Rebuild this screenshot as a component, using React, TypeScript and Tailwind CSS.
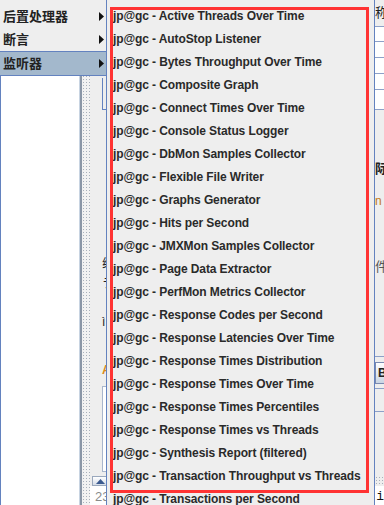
import React from 'react';

const items = [
  'Active Threads Over Time',
  'AutoStop Listener',
  'Bytes Throughput Over Time',
  'Composite Graph',
  'Connect Times Over Time',
  'Console Status Logger',
  'DbMon Samples Collector',
  'Flexible File Writer',
  'Graphs Generator',
  'Hits per Second',
  'JMXMon Samples Collector',
  'Page Data Extractor',
  'PerfMon Metrics Collector',
  'Response Codes per Second',
  'Response Latencies Over Time',
  'Response Times Distribution',
  'Response Times Over Time',
  'Response Times Percentiles',
  'Response Times vs Threads',
  'Synthesis Report (filtered)',
  'Transaction Throughput vs Threads',
  'Transactions per Second',
];

const Arrow = () => (
  <svg width="5" height="9" viewBox="0 0 5 9">
    <polygon points="0,0 5,4.5 0,9" fill="#111" />
  </svg>
);

const MenuItem = ({ label, selected }: { label: string; selected?: boolean }) => (
  <div
    className={`flex items-center justify-between pl-[3px] pr-[2px] ${
      selected ? 'h-[24px] bg-[#a3b8cc] border-t border-[#6382bf]' : 'h-[23px]'
    }`}
  >
    <span className="font-bold text-[13px] text-[#222]">{label}</span>
    <Arrow />
  </div>
);

const App = () => {
  return (
    <div
      className="relative w-[384px] h-[505px] overflow-hidden bg-[#eeeeee]"
      style={{ fontFamily: '"Liberation Sans", "Noto Sans CJK SC", sans-serif' }}
    >
      {/* window behind the popup */}
      <div className="flex h-full">
        <div className="w-[79px] shrink-0 bg-white border-l border-[#6382bf]" />
        <div className="w-[11px] shrink-0 flex">
          <div className="w-px bg-[#c8d4e2]" />
          <div className="w-[2px] bg-[#8a96a6]" />
          <div className="flex-1 bg-[#f2f2f2] bg-[radial-gradient(#a8b0bb_0.8px,transparent_0.8px)] bg-[length:3px_3px]" />
        </div>
        <div className="flex-1 flex flex-col min-w-0">
          <div className="flex-1 flex min-h-0">
            <div className="w-[16px] shrink-0 overflow-hidden flex flex-col pl-[12px] text-[12px] text-[#222]">
              <div className="mt-[78px] h-[32px] w-[10px] border-l border-b border-[#6382bf]" />
              <div className="mt-[144px] leading-[20px] whitespace-nowrap">线</div>
              <div className="leading-[20px]">ラ</div>
              <div className="mt-[18px] leading-[20px]">ì</div>
              <div className="mt-[28px] font-bold text-[#d98a1c] leading-[20px]">A</div>
              <div className="mt-[6px] h-[86px] w-[20px] bg-white border border-[#a9b6cc]" />
            </div>
            <div className="w-[268px] shrink-0" />
            <div className="w-[40px] shrink-0 flex flex-col border-l border-[#6382bf]">
              <div className="h-[27px] flex items-center text-[13px] text-[#222] border-b border-[#8da0c8]">称</div>
              <div className="h-[15px] bg-white border-b border-[#8da0c8]" />
              <div className="h-[16px] bg-white border-b border-[#8da0c8]" />
              <div className="h-[16px] bg-white border-b border-[#8da0c8]" />
              <div className="h-[16px] bg-white border-b border-[#8da0c8]" />
              <div className="h-[20px] bg-white border-b border-[#8da0c8]" />
              <div className="mt-[52px] font-bold text-[13px] text-[#222] leading-[14px]">际</div>
              <div className="mt-[18px] text-[12px] text-[#c47a1a] leading-[14px]">n c</div>
              <div className="mt-[52px] text-[13px] text-[#555] leading-[14px]">件</div>
              <div className="mt-[82px] border-t border-[#8da0c8]" />
              <div className="mt-[5px] h-[22px] flex items-center pl-[2px] bg-gradient-to-b from-white to-[#c9d5e3] border border-[#7a8ab0] text-[12px] font-bold text-[#222]">
                B
              </div>
              <div className="mt-[4px] border-t border-[#8da0c8]" />
              <div className="mt-[22px] border-t border-[#8da0c8]" />
            </div>
          </div>
          <div className="h-[10px] flex">
            <div className="w-[16px] ml-[2px] flex items-center justify-center bg-gradient-to-b from-white to-[#d5dde8] border border-[#9aa8bd]">
              <svg width="9" height="5" viewBox="0 0 9 5">
                <polygon points="0,5 4.5,0 9,5" fill="#3b5a8f" />
              </svg>
            </div>
            <div className="flex-1 bg-[radial-gradient(#a8b0bb_0.8px,transparent_0.8px)] bg-[length:3px_3px]" />
          </div>
          <div className="h-[19px] flex bg-white">
            <div className="w-[284px] pl-[5px] text-[13px] text-[#8a8a8a] leading-[22px]">23</div>
            <div className="text-[13px] text-[#111] leading-[22px]" style={{ fontFamily: '"Liberation Mono", monospace' }}>
              :i
            </div>
          </div>
        </div>
      </div>

      {/* first-level popup */}
      <div className="absolute left-0 top-0 w-[107px] pt-[5px] bg-[#eeeeee] border-r border-b border-[#6382bf]">
        <MenuItem label="后置处理器" />
        <MenuItem label="断言" />
        <MenuItem label="监听器" selected />
      </div>

      {/* submenu */}
      <div className="absolute left-[106px] top-0 w-[269px] pt-[4px] bg-[#eeeeee] border-l border-r border-[#6382bf]">
        {items.map(name => (
          <div
            key={name}
            className="h-[23px] flex items-center pl-[6px] text-[12px] font-bold tracking-[-0.1px] text-[#2a2a2a] whitespace-nowrap"
          >
            jp@gc - {name}
          </div>
        ))}
      </div>

      {/* red highlight */}
      <div className="absolute left-[110px] top-[7px] w-[259px] h-[486px] border-[3px] border-[#ff3333] pointer-events-none" />
    </div>
  );
};

export default App;
